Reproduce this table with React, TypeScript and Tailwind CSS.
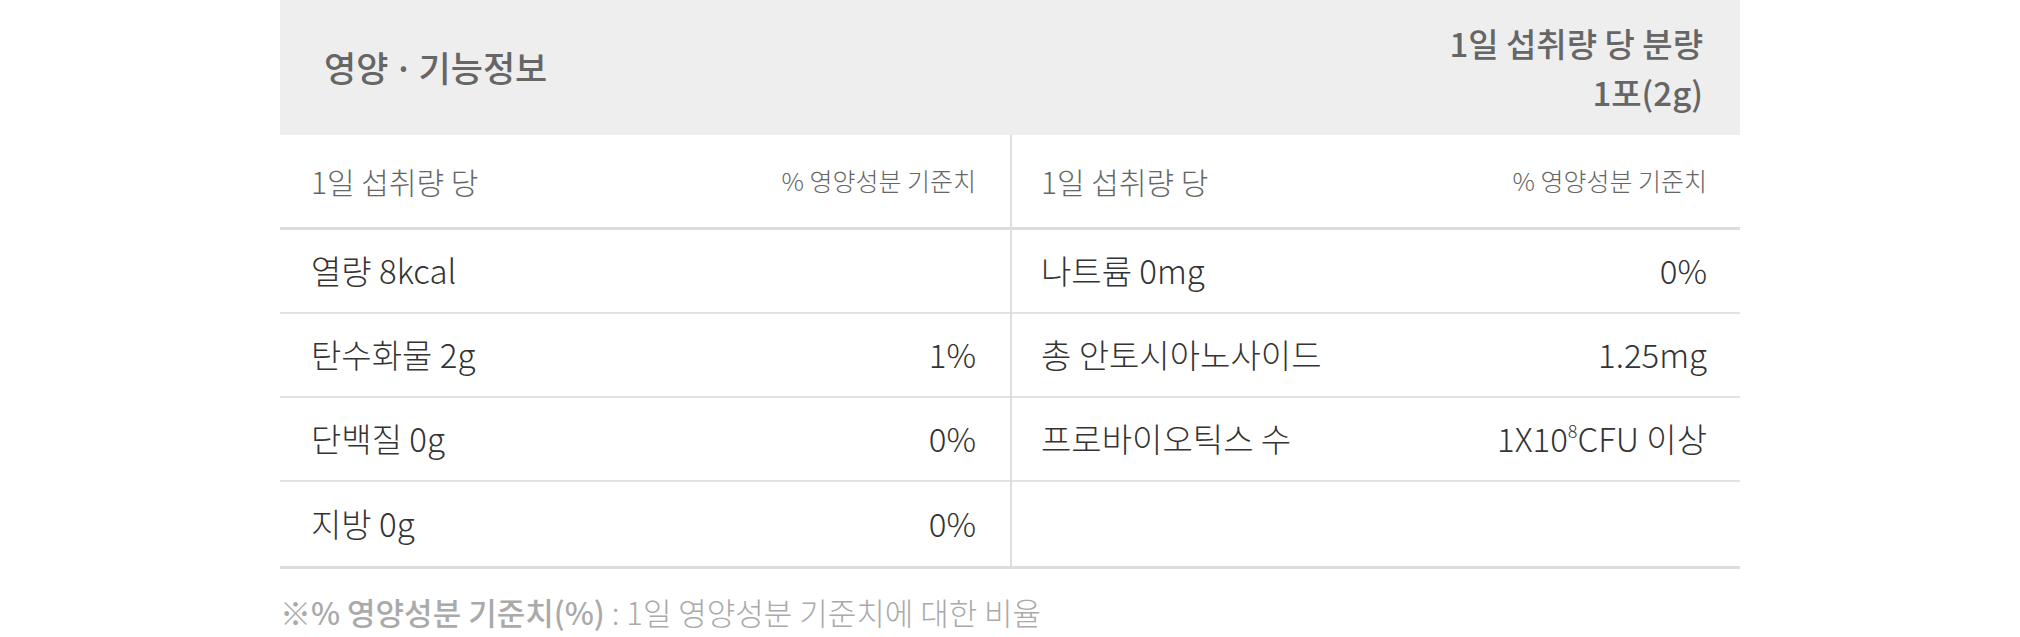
const font = "font-['Noto_Sans_CJK_KR','Noto_Sans',sans-serif]";

type Row = { label: string; value?: React.ReactNode };

const leftRows: Row[] = [
  { label: "열량 8kcal" },
  { label: "탄수화물 2g", value: "1%" },
  { label: "단백질 0g", value: "0%" },
  { label: "지방 0g", value: "0%" },
];

const rightRows: Row[] = [
  { label: "나트륨 0mg", value: "0%" },
  { label: "총 안토시아노사이드", value: "1.25mg" },
  {
    label: "프로바이오틱스 수",
    value: (
      <>
        1X10<sup className="relative -top-[14px] text-[18px]">8</sup>CFU 이상
      </>
    ),
  },
  { label: "" },
];

function Column({ rows, divider }: { rows: Row[]; divider?: boolean }) {
  const pad = divider ? "pl-[29px] pr-[33px]" : "pl-[31px] pr-[34px]";
  return (
    <div className={divider ? "border-l-2 border-[#dedede]" : ""}>
      {/* column header */}
      <div className={`flex h-[95px] items-center justify-between border-b-[3px] border-[#dcdcdc] ${pad}`}>
        <span className="text-[30px] font-light text-[#666]">1일 섭취량 당</span>
        <span className="text-[25px] font-light text-[#666]">% 영양성분 기준치</span>
      </div>
      {rows.map((r, i) => (
        <div
          key={i}
          className={
            `flex h-[84px] items-center justify-between ${pad} text-[33px] font-light text-[#333] ` +
            (i < rows.length - 1 ? "border-b-2 border-[#e2e2e2]" : "")
          }
        >
          <span>{r.label}</span>
          <span>{r.value}</span>
        </div>
      ))}
    </div>
  );
}

export default function App() {
  return (
    <div className={`min-h-[637px] bg-white ${font}`}>
      <div className="mx-auto w-[1460px]">
        {/* Title bar */}
        <div className="flex h-[135px] items-center justify-between bg-[#eeeeee] pl-[44px] pr-[37px]">
          <h2 className="text-[35px] font-medium text-[#666]">
            영양<span className="mx-[5px]">·</span>기능정보
          </h2>
          <div className="text-right text-[33px] font-medium leading-[49px] text-[#666]">
            <p>1일 섭취량 당 분량</p>
            <p>1포(2g)</p>
          </div>
        </div>

        {/* Table */}
        <div className="grid grid-cols-2 border-b-[3px] border-[#dcdcdc]">
          <Column rows={leftRows} />
          <Column rows={rightRows} divider />
        </div>

        <p className="mt-[20px] text-[31px] font-light text-[#aaa]">
          <span className="font-medium">※% 영양성분 기준치(%)</span> : 1일 영양성분 기준치에 대한 비율
        </p>
      </div>
    </div>
  );
}
